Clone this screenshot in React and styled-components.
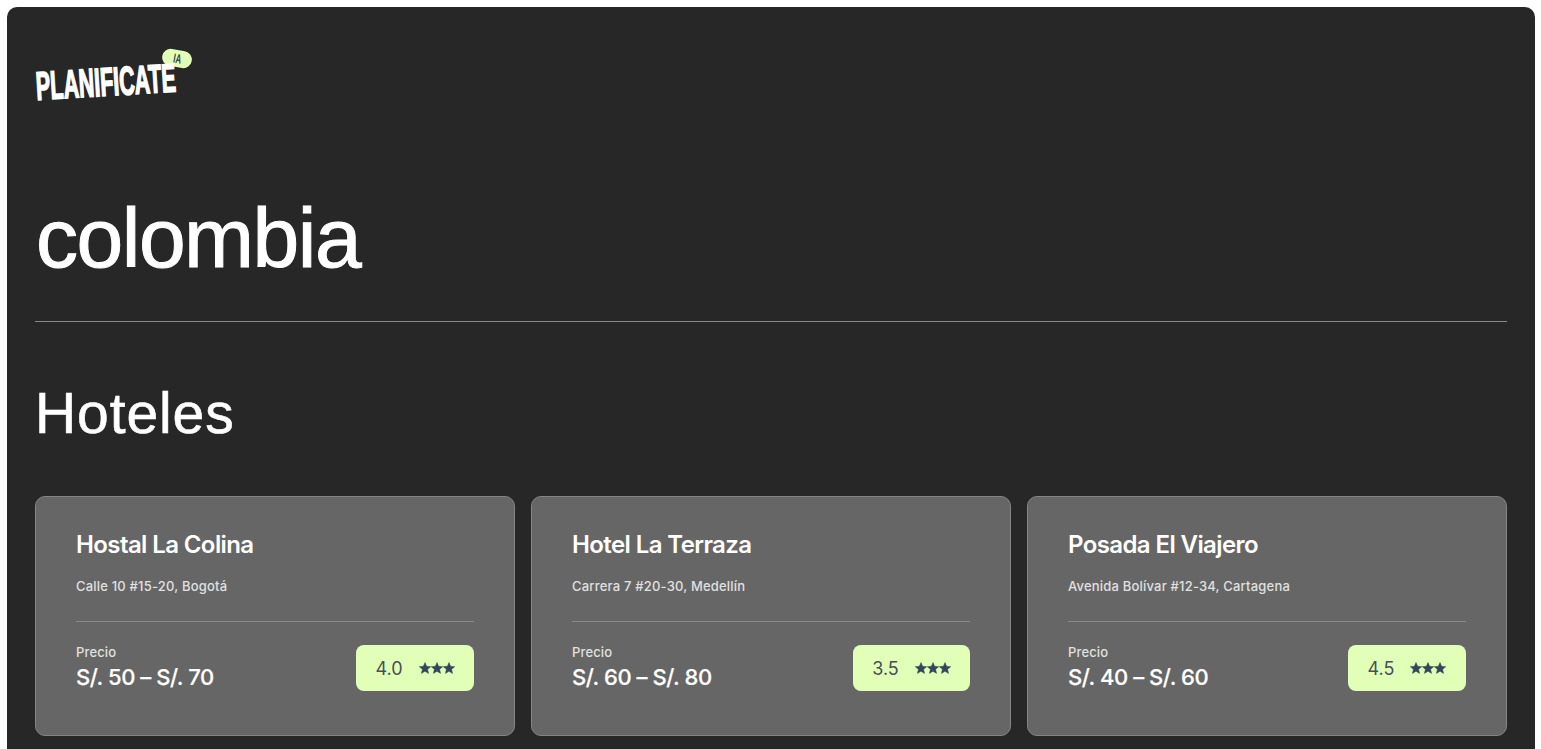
import React from "react";
import styled, { createGlobalStyle } from "styled-components";

const Global = createGlobalStyle`
  html, body { margin: 0; padding: 0; background: #fff; overflow: hidden; height: 100%; }
  body { font-family: Inter, "Liberation Sans", sans-serif; }
`;
const Page = styled.div`
  margin: 7px 6px 0 7px;
  height: 760px;
  background: #272727;
  border-radius: 10px;
  padding: 0 28px;
  box-sizing: border-box;
  display: flex;
  flex-direction: column;
`;
const LogoWrap = styled.div`
  position: relative;
  width: 160px;
  height: 60px;
  margin-top: 41px;
  flex: none;
`;
const LogoText = styled.span`
  position: absolute;
  left: 1px;
  top: 20px;
  font-family: "Liberation Sans", sans-serif;
  font-weight: 700;
  font-size: 40px;
  line-height: 36px;
  color: #fff;
  white-space: nowrap;
  -webkit-text-stroke: 1.6px #fff;
  transform-origin: 0 50%;
  transform: rotate(-3.5deg) scaleX(0.535);
`;
const LogoBadge = styled.span`
  position: absolute;
  left: 127px;
  top: 2px;
  width: 30px;
  height: 17px;
  border-radius: 9px;
  background: #e2ffb8;
  color: #33404a;
  font-family: "Liberation Sans", sans-serif;
  font-weight: 700;
  font-size: 13px;
  display: flex;
  align-items: center;
  justify-content: center;
  transform: rotate(10deg);
`;
const BadgeLabel = styled.span`
  display: block;
  transform: scaleX(0.6);
`;
const Title = styled.h1`
  margin: 82px 0 0 1px;
  font-family: "Liberation Sans", sans-serif;
  font-size: 84px;
  line-height: 97px;
  font-weight: 400;
  letter-spacing: -1.5px;
  color: #fff;
  -webkit-text-stroke: 1px #fff;
`;
const Divider = styled.hr`
  margin: 0;
  border: 0;
  height: 1px;
  background: #8a8a8a;
  flex: none;
`;
const TitleRule = styled(Divider)`
  margin-top: 34px;
`;
const Section = styled.h2`
  margin: 57px 0 0;
  font-family: "Liberation Sans", sans-serif;
  font-size: 57px;
  line-height: 68px;
  font-weight: 400;
  letter-spacing: 0.9px;
  color: #fff;
  -webkit-text-stroke: 0.6px #fff;
`;
const Cards = styled.div`
  display: grid;
  grid-template-columns: repeat(3, 1fr);
  gap: 16px;
  margin-top: 49px;
`;
const Card = styled.div`
  height: 240px;
  box-sizing: border-box;
  background: #666666;
  border: 1px solid #858585;
  border-radius: 10px;
  padding: 33px 40px 32px;
  display: flex;
  flex-direction: column;
`;
const Name = styled.h3`
  margin: 0;
  font-size: 24px;
  line-height: 30px;
  font-weight: 600;
  letter-spacing: -0.6px;
  color: #fff;
`;
const Address = styled.p`
  margin: 16px 0 0;
  font-size: 13px;
  line-height: 20px;
  font-weight: 500;
  letter-spacing: 0.2px;
  color: #e0e0e0;
`;
const CardRule = styled(Divider)`
  margin-top: 25px;
`;
const Footer = styled.div`
  display: flex;
  justify-content: space-between;
  align-items: flex-start;
  margin-top: 23px;
`;
const Price = styled.div`
  display: flex;
  flex-direction: column;
  margin-top: -1px;
`;
const PriceLabel = styled.span`
  font-size: 13px;
  line-height: 16px;
  font-weight: 500;
  letter-spacing: 0.15px;
  color: #e0e0e0;
`;
const PriceValue = styled.span`
  margin-top: 4px;
  font-size: 22px;
  line-height: 26px;
  font-weight: 500;
  letter-spacing: -0.45px;
  color: #fff;
  -webkit-text-stroke: 0.2px #fff;
`;
const Rating = styled.div`
  width: ${(p) => p.$w}px;
  height: 46px;
  box-sizing: border-box;
  background: #e2ffb8;
  border-radius: 8px;
  display: flex;
  align-items: center;
  justify-content: center;
  gap: 16px;
  color: #454f58;
  font-size: 18px;
`;
const Stars = styled.span`
  display: flex;
`;
const Star = () => (
  <svg width="12" height="12" viewBox="0 0 24 24" fill="#33475a" stroke="#33475a" strokeWidth="1">
    <path d="M12 1l3.2 7.6 8.3.7-6.3 5.4 1.900 8.100L12 18.500 4.900 22.800l1.900-8.100L.5 9.300l8.300-.7z" />
  </svg>
);

const hotels = [
  { name: "Hostal La Colina", addr: "Calle 10 #15-20, Bogotá", price: "S/. 50 – S/. 70", rate: "4.0", w: 118 },
  { name: "Hotel La Terraza", addr: "Carrera 7 #20-30, Medellín", price: "S/. 60 – S/. 80", rate: "3.5", w: 117 },
  { name: "Posada El Viajero", addr: "Avenida Bolívar #12-34, Cartagena", price: "S/. 40 – S/. 60", rate: "4.5", w: 118 },
];

export default function App() {
  return (
    <>
      <Global />
      <Page>
        <LogoWrap>
          <LogoBadge><BadgeLabel>IA</BadgeLabel></LogoBadge>
          <LogoText>PLANIFICATE</LogoText>
        </LogoWrap>
        <Title>colombia</Title>
        <TitleRule />
        <Section>Hoteles</Section>
        <Cards>
          {hotels.map((h) => (
            <Card key={h.name}>
              <Name>{h.name}</Name>
              <Address>{h.addr}</Address>
              <CardRule />
              <Footer>
                <Price>
                  <PriceLabel>Precio</PriceLabel>
                  <PriceValue>{h.price}</PriceValue>
                </Price>
                <Rating $w={h.w}>
                  <span>{h.rate}</span>
                  <Stars><Star /><Star /><Star /></Stars>
                </Rating>
              </Footer>
            </Card>
          ))}
        </Cards>
      </Page>
    </>
  );
}
